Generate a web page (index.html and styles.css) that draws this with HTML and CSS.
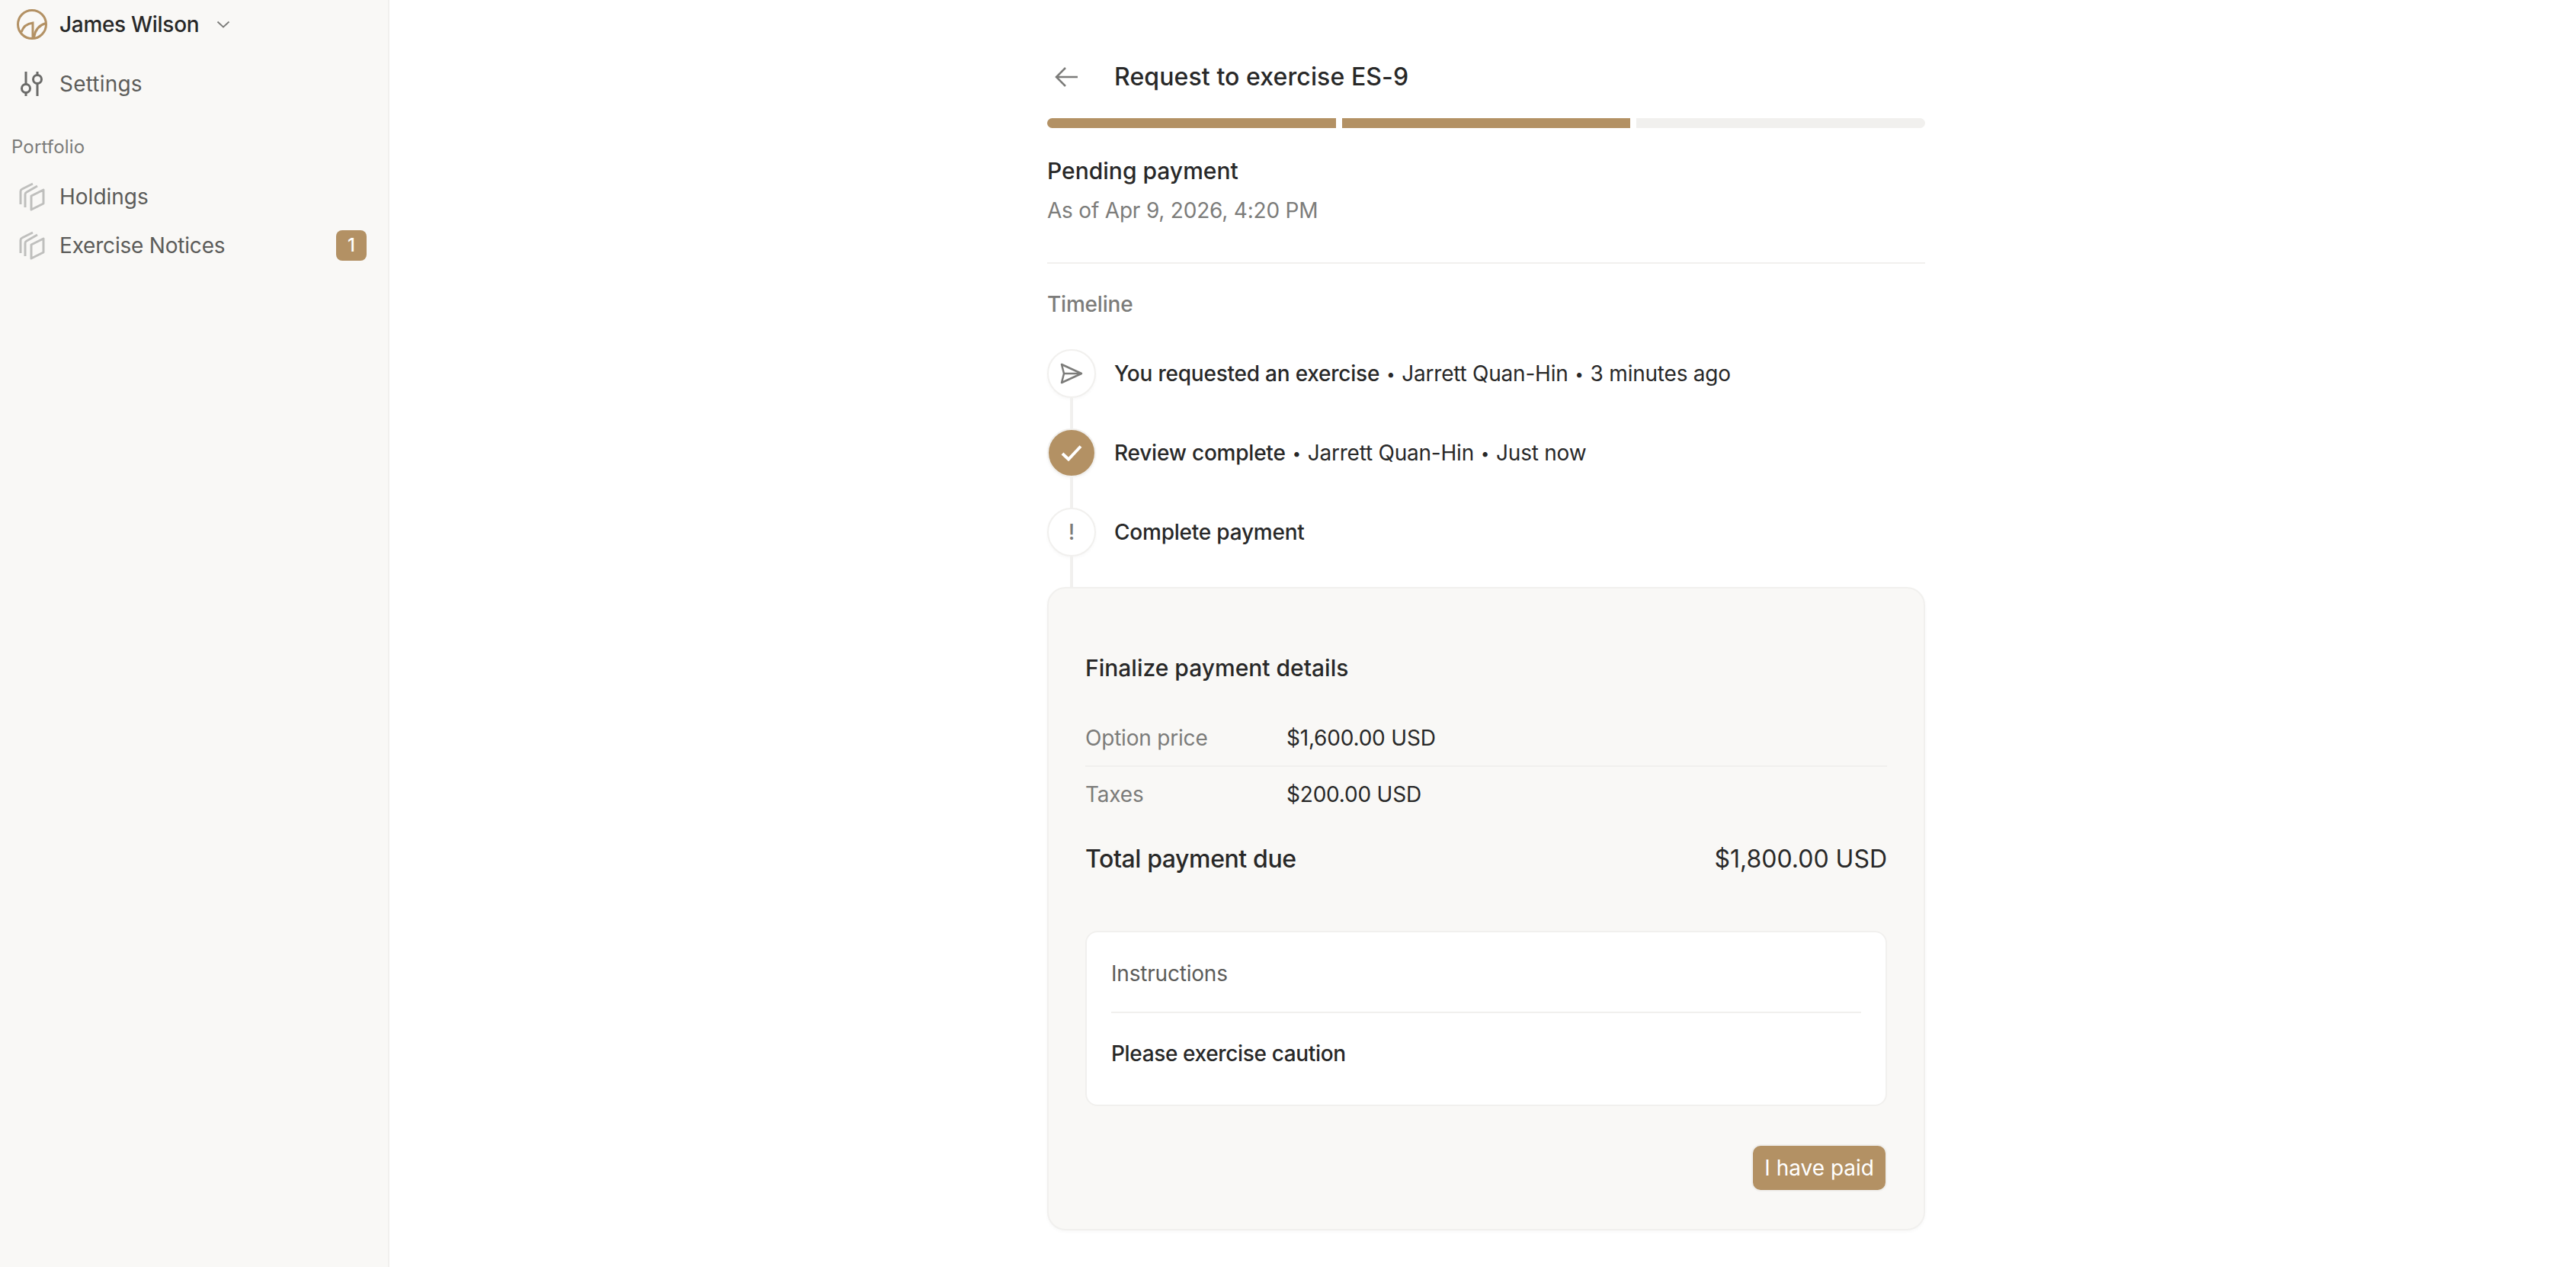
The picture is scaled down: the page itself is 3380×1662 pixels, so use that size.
FILE: index.html
```html
<!DOCTYPE html>
<html lang="en">
<head>
    <meta charset="UTF-8">
    <meta name="viewport" content="width=device-width, initial-scale=1.0">
    <title>Request to exercise ES-9</title>
    <link rel="stylesheet" href="styles.css">
</head>
<body>
    <!-- Sidebar -->
    <aside class="sidebar">
        <div class="nav-row account">
            <svg class="nav-icon" width="40" height="40" viewBox="0 0 40 40" fill="none" stroke="#b39164" stroke-width="3">
                <circle cx="20" cy="20" r="18.5"/>
                <path d="M6 30C8 24 13 19 21 18V38"/>
                <path d="M22.500 37C24 28 29 21 38 18.500"/>
            </svg>
            <span class="account-name">James Wilson</span>
            <svg class="chevron" width="18" height="10" viewBox="0 0 18 10" fill="none" stroke="#7c7c7a" stroke-width="1.800">
                <path d="M1.500 1.500L9 8.500L16.500 1.500"/>
            </svg>
        </div>
        <div class="nav-row settings">
            <svg class="nav-icon" width="40" height="36" viewBox="0 0 40 36" fill="none" stroke="#6b6b69" stroke-width="3">
                <path d="M12 2V18M12 30V34"/>
                <circle cx="12" cy="24" r="5.500"/>
                <path d="M27 2V6M27 18V34"/>
                <circle cx="27" cy="12" r="5.500"/>
            </svg>
            <span class="settings-name">Settings</span>
        </div>

        <div class="nav-label">Portfolio</div>

        <div class="nav-row holdings">
            <svg class="nav-icon" width="40" height="38" viewBox="0 0 40 38" fill="none" stroke="#bfbfbd" stroke-width="3" stroke-linejoin="round">
                <path d="M19 18L35 10V28L19 36Z"/>
                <path d="M11 33V16Q11 14 13 13L27 5"/>
                <path d="M5 29V12Q5 10 7 9L21 2"/>
            </svg>
            <span>Holdings</span>
        </div>
        <div class="nav-row notices">
            <svg class="nav-icon" width="40" height="38" viewBox="0 0 40 38" fill="none" stroke="#bfbfbd" stroke-width="3" stroke-linejoin="round">
                <path d="M19 18L35 10V28L19 36Z"/>
                <path d="M11 33V16Q11 14 13 13L27 5"/>
                <path d="M5 29V12Q5 10 7 9L21 2"/>
            </svg>
            <span class="notices-name">Exercise Notices</span>
            <span class="badge">1</span>
        </div>
    </aside>

    <!-- Main content -->
    <main class="main">
        <div class="column">
            <header class="page-header">
                <svg class="back" width="30" height="28" viewBox="0 0 30 28" fill="none" stroke="#7c7c7a" stroke-width="2.500">
                    <path d="M30 14H2M14 2L2 14L14 26"/>
                </svg>
                <h1>Request to exercise ES-9</h1>
            </header>

            <div class="progress">
                <div class="segment done"></div>
                <div class="segment done"></div>
                <div class="segment"></div>
            </div>

            <div class="status">
                <div class="status-title">Pending payment</div>
                <div class="status-date">As of Apr 9, 2026, 4:20 PM</div>
            </div>

            <h2 class="section-label">Timeline</h2>

            <div class="timeline">
                <div class="step">
                    <div class="marker">
                        <div class="circle">
                            <svg width="30" height="28" viewBox="0 0 30 28" fill="none" stroke="#7c7c7a" stroke-width="2.500" stroke-linejoin="round">
                                <path d="M2 2L28 14L2 26L5 14Z"/>
                                <path d="M5 14H28"/>
                            </svg>
                        </div>
                        <div class="line"></div>
                    </div>
                    <div class="step-text"><strong>You requested an exercise</strong><span class="dot">•</span>Jarrett Quan-Hin<span class="dot">•</span>3 minutes ago</div>
                </div>
                <div class="step">
                    <div class="marker">
                        <div class="circle filled">
                            <svg width="28" height="22" viewBox="0 0 28 22" fill="none" stroke="#ffffff" stroke-width="4">
                                <path d="M2 12L10 19.500L26 2.500"/>
                            </svg>
                        </div>
                        <div class="line"></div>
                    </div>
                    <div class="step-text"><strong>Review complete</strong><span class="dot">•</span>Jarrett Quan-Hin<span class="dot">•</span>Just now</div>
                </div>
                <div class="step">
                    <div class="marker">
                        <div class="circle"><span class="bang">!</span></div>
                        <div class="line"></div>
                    </div>
                    <div class="step-text"><strong>Complete payment</strong></div>
                </div>
            </div>

            <section class="card">
                <h3>Finalize payment details</h3>
                <div class="detail-row first">
                    <span class="detail-label">Option price</span>
                    <span>$1,600.00 USD</span>
                </div>
                <div class="detail-row">
                    <span class="detail-label">Taxes</span>
                    <span>$200.00 USD</span>
                </div>
                <div class="total-row">
                    <span class="total-label">Total payment due</span>
                    <span>$1,800.00 USD</span>
                </div>

                <div class="instructions">
                    <div class="instructions-title">Instructions</div>
                    <div class="instructions-body">Please exercise caution</div>
                </div>

                <div class="actions">
                    <button type="button" class="btn-primary">I have paid</button>
                </div>
            </section>
        </div>
    </main>
</body>
</html>
```

FILE: styles.css
```css
* {
    box-sizing: border-box;
}

html,
body {
    height: 100%;
}

body {
    margin: 0;
    display: flex;
    overflow: hidden;
    background-color: #ffffff;
    color: #282828;
    font-family: Inter, "Liberation Sans", sans-serif;
    font-size: 28px;
    line-height: 40px;
}

/* Sidebar */
.sidebar {
    flex: 0 0 511px;
    height: 100%;
    padding: 12px 28px 0 15px;
    background-color: #f9f8f6;
    border-right: 2px solid #f1f0ee;
    color: #5c5c5a;
}

.nav-row {
    display: flex;
    align-items: center;
    height: 40px;
}

.nav-icon {
    flex: none;
    margin: 0 16px 0 7px;
}

.account-name {
    color: #282828;
    font-weight: 500;
    letter-spacing: -0.3px;
}

.chevron {
    margin-left: 23px;
}

.settings {
    margin-top: 38px;
}

.settings-name {
    letter-spacing: 0.2px;
}

.notices-name {
    letter-spacing: -0.2px;
}

.nav-label {
    margin-top: 43px;
    font-size: 24px;
    line-height: 40px;
    letter-spacing: 0.15px;
    color: #7c7c7a;
}

.holdings {
    margin-top: 25px;
}

.notices {
    margin-top: 24px;
}

.badge {
    margin-left: auto;
    width: 40px;
    height: 40px;
    border-radius: 8px;
    background-color: #b39164;
    color: #ffffff;
    font-size: 24px;
    font-weight: 500;
    text-align: center;
}

/* Main column */
.main {
    flex: 1;
    display: flex;
    justify-content: center;
    padding-left: 9px;
}

.column {
    width: 1152px;
    padding-top: 78px;
}

.page-header {
    display: flex;
    align-items: center;
    height: 46px;
}

.back {
    margin-left: 10px;
    margin-right: 48px;
}

h1 {
    margin: 0;
    font-size: 32px;
    font-weight: 500;
    letter-spacing: 0.1px;
}

.progress {
    display: flex;
    gap: 8px;
    margin-top: 31px;
}

.segment {
    flex: 1;
    height: 13px;
    background-color: #f1f0ee;
}

.segment.done {
    background-color: #b39164;
}

.segment:first-child {
    border-radius: 7px 0 0 7px;
}

.segment:last-child {
    border-radius: 0 7px 7px 0;
}

.status {
    margin-top: 36px;
    padding-bottom: 48px;
    border-bottom: 2px solid #f1f0ee;
}

.status-title {
    font-size: 30px;
    font-weight: 500;
}

.status-date {
    margin-top: 12px;
    color: #7c7c7a;
    letter-spacing: -0.2px;
}

.section-label {
    margin: 33px 0 0;
    font-size: 28px;
    font-weight: 500;
    color: #7c7c7a;
    letter-spacing: -0.2px;
}

/* Timeline */
.timeline {
    margin-top: 39px;
}

.step {
    display: flex;
    height: 104px;
}

.marker {
    flex: none;
    display: flex;
    flex-direction: column;
    align-items: center;
    width: 64px;
    margin-right: 24px;
}

.circle {
    flex: none;
    display: flex;
    align-items: center;
    justify-content: center;
    width: 64px;
    height: 64px;
    background-color: #ffffff;
    border: 2px solid #f1f0ee;
    border-radius: 50%;
    box-shadow: 0 2px 4px rgba(0, 0, 0, 0.03);
}

.circle.filled {
    background-color: #b39164;
    border-color: #f1f0ee;
}

.bang {
    font-weight: 500;
    color: #7c7c7a;
}

.line {
    flex: 1;
    width: 4px;
    background-color: #f1f0ee;
}

.step-text {
    height: 64px;
    line-height: 64px;
    letter-spacing: -0.22px;
}

.step-text strong {
    font-weight: 500;
}

.dot {
    margin: 0 9px;
    font-size: 20px;
    vertical-align: 2px;
}

/* Payment card */
.card {
    padding: 84px 48px 48px;
    height: 844px;
    background-color: #f9f8f6;
    border: 2px solid #f1f0ee;
    border-radius: 24px;
    box-shadow: 0 2px 4px rgba(0, 0, 0, 0.03);
}

h3 {
    margin: 0;
    font-size: 30px;
    font-weight: 500;
}

.detail-row {
    display: flex;
    height: 72px;
    padding-top: 16px;
    letter-spacing: -0.2px;
}

.detail-row.first {
    margin-top: 36px;
    height: 74px;
    border-bottom: 2px solid #f1f0ee;
}

.detail-label {
    width: 264px;
    color: #7c7c7a;
}

.total-row {
    display: flex;
    justify-content: space-between;
    font-size: 32px;
    margin-top: 29px;
}

.total-label {
    font-weight: 500;
    letter-spacing: -0.4px;
}

.instructions {
    margin-top: 74px;
    height: 230px;
    padding: 14px 32px 0;
    background-color: #ffffff;
    border: 2px solid #f1f0ee;
    border-radius: 16px;
}

.instructions-title {
    padding: 20px 0 30px;
    border-bottom: 2px solid #f1f0ee;
    color: #5c5c5a;
    letter-spacing: -0.2px;
}

.instructions-body {
    margin-top: 33px;
    font-weight: 500;
    letter-spacing: -0.36px;
}

.actions {
    display: flex;
    justify-content: flex-end;
    margin-top: 50px;
}

.btn-primary {
    height: 62px;
    padding: 0 15px;
    background-color: #b39164;
    border: 2px solid #f1f0ee;
    border-radius: 12px;
    color: #ffffff;
    font-family: inherit;
    font-size: 28px;
    font-weight: 400;
}
```
